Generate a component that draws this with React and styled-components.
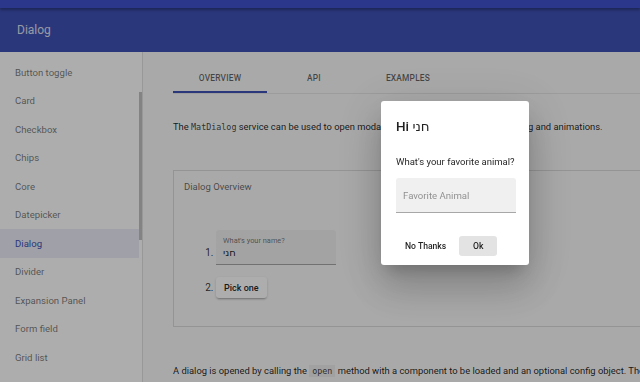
import styled, { createGlobalStyle } from 'styled-components';

const GlobalStyle = createGlobalStyle`
  html, body {
    margin: 0;
    padding: 0;
    width: 640px;
    height: 382px;
    overflow: hidden;
    background: #fafafa;
    font-family: Roboto, 'DejaVu Sans', sans-serif;
  }
`;

const Page = styled.div`
  display: flex;
  flex-direction: column;
  height: 382px;
  width: 640px;
  overflow: hidden;
`;

const TopStrip = styled.div`
  height: 8px;
  background: #2b378a;
  box-shadow: 0 2px 3px rgba(0, 0, 0, 0.3);
  position: relative;
  z-index: 1;
`;

const Header = styled.header`
  height: 44px;
  background: #3f51b5;
  display: flex;
  align-items: center;
  padding-left: 17px;
  color: rgba(255, 255, 255, 0.85);
  font-size: 12px;
  flex-shrink: 0;
`;

const Body = styled.div`
  display: flex;
  flex: 1;
  min-height: 0;
`;

const Sidebar = styled.nav`
  width: 142px;
  flex-shrink: 0;
  display: flex;
  background: #fff;
  border-right: 1px solid rgba(0, 0, 0, 0.12);
`;

const NavList = styled.ul`
  list-style: none;
  margin: 0;
  padding: 6px 0 0;
  flex: 1;
`;

const NavItem = styled.li`
  height: 28.5px;
  display: flex;
  align-items: center;
  padding-left: 15px;
  font-size: 9.6px;
  color: ${(p) => (p.$active ? '#3f51b5' : 'rgba(0, 0, 0, 0.54)')};
  background: ${(p) => (p.$active ? '#eceef8' : 'transparent')};
`;

const ScrollTrack = styled.div`
  width: 3px;
  padding-top: 40px;
  display: flex;
  flex-direction: column;
`;

const ScrollThumb = styled.div`
  height: 148px;
  background: #c2c2c2;
`;

const Main = styled.main`
  flex: 1;
  padding-left: 30px;
  min-width: 0;
  overflow: hidden;
`;

const Content = styled.div`
  width: 620px;
`;

const TabBar = styled.div`
  display: flex;
  margin-top: 12px;
  border-bottom: 1px solid rgba(0, 0, 0, 0.08);
`;

const Tab = styled.div`
  width: 94px;
  height: 27px;
  display: flex;
  align-items: center;
  justify-content: center;
  font-size: 8.4px;
  font-weight: 500;
  letter-spacing: 0.2px;
  color: rgba(0, 0, 0, 0.6);
  border-bottom: 2px solid ${(p) => (p.$active ? '#3f51b5' : 'transparent')};
`;

const Paragraph = styled.p`
  margin: ${(p) => p.$margin || '0'};
  font-size: 9.4px;
  line-height: 15px;
  color: rgba(0, 0, 0, 0.87);
`;

const Code = styled.code`
  font-family: 'DejaVu Sans Mono', 'Liberation Mono', monospace;
  font-size: 8.4px;
  background: ${(p) => (p.$boxed ? 'rgba(0, 0, 0, 0.05)' : 'transparent')};
  padding: ${(p) => (p.$boxed ? '1px 3px' : '0')};
  color: rgba(0, 0, 0, 0.75);
`;

const Card = styled.section`
  margin-top: 35px;
  height: 157px;
  border: 1px solid rgba(0, 0, 0, 0.12);
  background: #fafafa;
  padding: 10px 10px 0;
  box-sizing: border-box;
`;

const CardTitle = styled.div`
  font-size: 9.5px;
  color: rgba(0, 0, 0, 0.6);
`;

const Steps = styled.ol`
  margin: 38px 0 0;
  padding-left: 32px;
  font-size: 10px;
  color: rgba(0, 0, 0, 0.8);

  li + li {
    margin-top: 12px;
  }
`;

const Field = styled.div`
  display: ${(p) => (p.$inline ? 'inline-block' : 'block')};
  width: 120px;
  height: 35px;
  box-sizing: border-box;
  background: #f0f0f0;
  border-bottom: 1px solid rgba(0, 0, 0, 0.3);
  border-radius: 3px 3px 0 0;
  padding: ${(p) => (p.$inline ? '6px 7px 0' : '11px 7px 0')};
  vertical-align: baseline;
  font-family: Roboto, 'DejaVu Sans', sans-serif;
`;

const FieldLabel = styled.span`
  display: block;
  font-size: 7.4px;
  color: rgba(0, 0, 0, 0.54);
  line-height: 10px;
`;

const FieldValue = styled.span`
  display: block;
  font-size: 10px;
  color: rgba(0, 0, 0, 0.87);
  line-height: 14px;
`;

const Placeholder = styled.span`
  display: block;
  font-size: 9.6px;
  line-height: 14px;
  color: rgba(0, 0, 0, 0.42);
`;

const RaisedButton = styled.button`
  height: 21px;
  padding: 0 8px;
  border: none;
  border-radius: 3px;
  background: #fff;
  font-family: Roboto, sans-serif;
  font-size: 9px;
  font-weight: 500;
  color: rgba(0, 0, 0, 0.87);
  box-shadow: 0 2px 2px -1px rgba(0, 0, 0, 0.25), 0 1px 3px rgba(0, 0, 0, 0.15);
`;

const Backdrop = styled.div`
  position: fixed;
  inset: 0;
  background: rgba(0, 0, 0, 0.32);
  padding: 101px 0 0 381px;
`;

const DialogBox = styled.div`
  width: 148px;
  height: 164px;
  box-sizing: border-box;
  background: #fff;
  border-radius: 3px;
  padding: 15px 13px 0 15px;
  box-shadow: 0 11px 15px -7px rgba(0, 0, 0, 0.2), 0 24px 38px 3px rgba(0, 0, 0, 0.14),
    0 9px 46px 8px rgba(0, 0, 0, 0.12);
`;

const DialogTitle = styled.h2`
  margin: 0;
  font-size: 13.5px;
  font-weight: 500;
  line-height: 20px;
  color: rgba(0, 0, 0, 0.87);
`;

const DialogText = styled.p`
  margin: 19px 0 9px;
  font-size: 9.5px;
  line-height: 14px;
  color: rgba(0, 0, 0, 0.87);
`;

const Actions = styled.div`
  display: flex;
  align-items: center;
  gap: 4px;
  margin-top: 23px;
`;

const FlatButton = styled.button`
  height: 20px;
  min-width: 38px;
  padding: 0 9px;
  border: none;
  border-radius: 3px;
  background: ${(p) => (p.$filled ? '#e3e3e3' : 'transparent')};
  font-family: Roboto, sans-serif;
  font-size: 8.6px;
  font-weight: 500;
  color: rgba(0, 0, 0, 0.87);
`;

const navItems = [
  'Button toggle',
  'Card',
  'Checkbox',
  'Chips',
  'Core',
  'Datepicker',
  'Dialog',
  'Divider',
  'Expansion Panel',
  'Form field',
  'Grid list'
];

export default function App() {
  return (
    <>
      <GlobalStyle />
      <Page>
        <TopStrip />
        <Header>Dialog</Header>
        <Body>
          <Sidebar>
            <NavList>
              {navItems.map((item) => (
                <NavItem key={item} $active={item === 'Dialog'}>
                  {item}
                </NavItem>
              ))}
            </NavList>
            <ScrollTrack>
              <ScrollThumb />
            </ScrollTrack>
          </Sidebar>
          <Main>
            <Content>
              <TabBar>
                <Tab $active>OVERVIEW</Tab>
                <Tab>API</Tab>
                <Tab>EXAMPLES</Tab>
              </TabBar>
              <Paragraph $margin="25px 0 0">
                The <Code>MatDialog</Code> service can be used to open modal dialogs with
                Material Design styling and animations.
              </Paragraph>
              <Card>
                <CardTitle>Dialog Overview</CardTitle>
                <Steps>
                  <li>
                    <Field $inline>
                      <FieldLabel>What's your name?</FieldLabel>
                      <FieldValue>חני</FieldValue>
                    </Field>
                  </li>
                  <li>
                    <RaisedButton>Pick one</RaisedButton>
                  </li>
                </Steps>
              </Card>
              <Paragraph $margin="36px 0 0">
                A dialog is opened by calling the <Code $boxed>open</Code> method with a
                component to be loaded and an optional config object. The open method will
                return an instance of MatDialogRef.
              </Paragraph>
            </Content>
          </Main>
        </Body>
      </Page>
      <Backdrop>
        <DialogBox>
          <DialogTitle>Hi חני</DialogTitle>
          <DialogText>What's your favorite animal?</DialogText>
          <Field>
            <Placeholder>Favorite Animal</Placeholder>
          </Field>
          <Actions>
            <FlatButton>No Thanks</FlatButton>
            <FlatButton $filled>Ok</FlatButton>
          </Actions>
        </DialogBox>
      </Backdrop>
    </>
  );
}
